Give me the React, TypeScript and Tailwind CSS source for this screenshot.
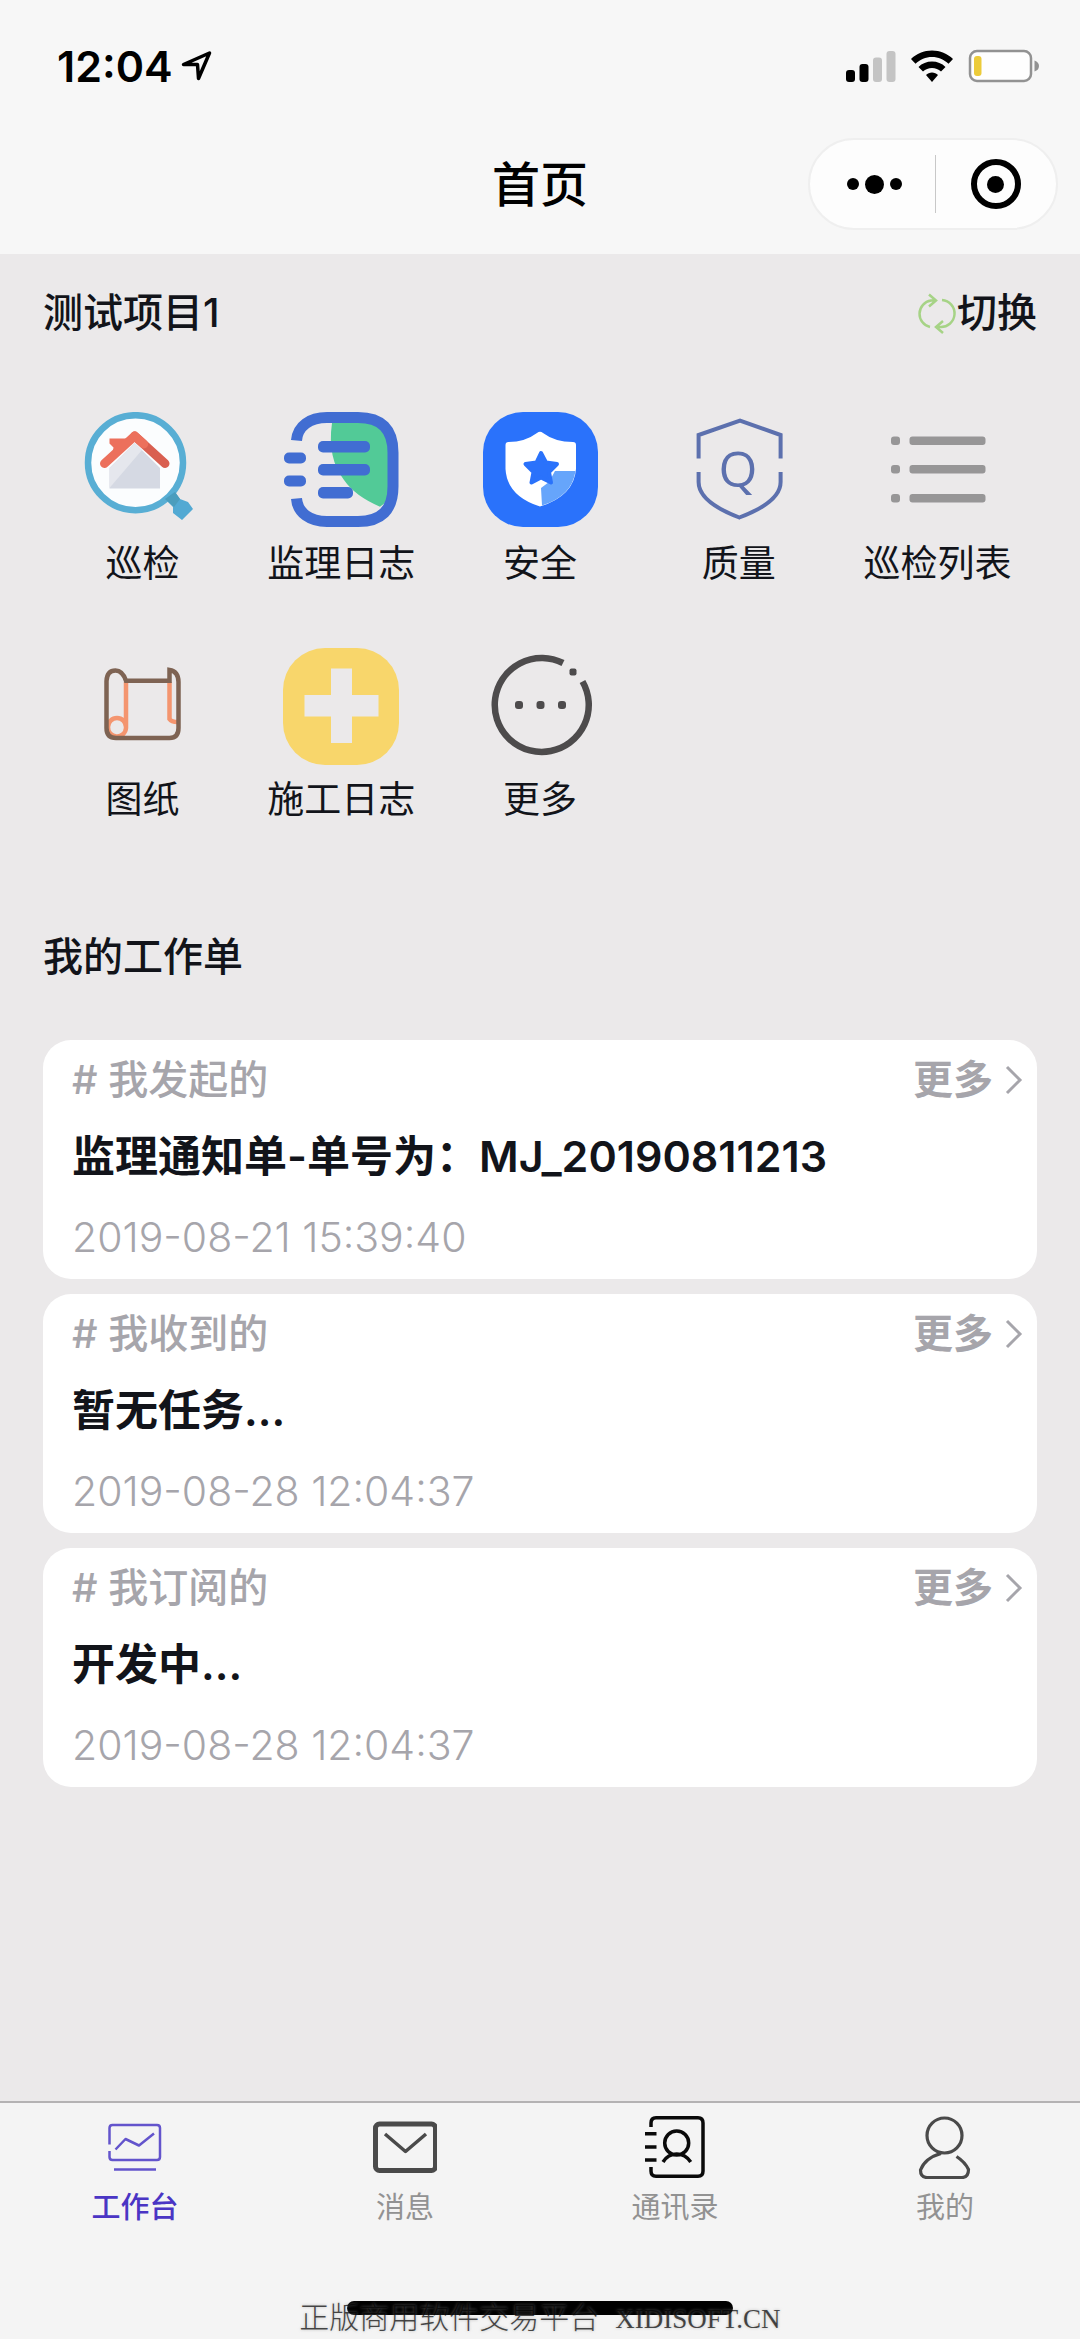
import React, { useState } from 'react';

interface Modulo {
    nome: string;
    icone: React.ReactNode;
}

interface Tarefa {
    id: string;
    grupo: string;
    titulo: string;
    data: string;
}

interface Aba {
    id: string;
    nome: string;
    icone: React.ReactNode;
}

const modulos: Modulo[] = [
    {
        nome: '巡检',
        icone: (
            <>
                <circle cx="51.5" cy="50.7" r="47.5" fill="#fbfdfe" stroke="#58aed4" strokeWidth="6.5" />
                <path d="M25.5 56 50.7 31 76 56v20.5H25.5z" fill="#d5d9e3" />
                <path d="M25.5 56 50.7 31 58 38 25.5 76z" fill="#e5e7ed" />
                <path d="M25.5 26.5h17l-3 12-12 8 2-11-4-4z" fill="#ec705c" />
                <path d="M81 51.5 50.7 24" fill="none" stroke="#d95f50" strokeWidth="9" strokeLinecap="round" />
                <path d="M20.5 51.5 50.7 24l9 8" fill="none" stroke="#ec705c" strokeWidth="9" strokeLinecap="round" strokeLinejoin="round" />
                <path d="m81 87 10-7 5 7 8 3 5 7-11 11-9-7v-6z" fill="#52a9d3" />
                <path d="m81 87 10-7 5 7-6 8z" fill="#4b9dbd" />
            </>
        ),
    },
    {
        nome: '监理日志',
        icone: (
            <>
                <path d="M49 11h35q21 0 21 21v50q0 8-8 12.700Q72 84 61 68 44 46 49 11z" fill="#52ca97" />
                <path
                    d="M13.500 28.500C14.500 14 27 5.500 44 5.500h31q35 0 35 35v34q0 35-35 35H44C27 109.500 14.500 101 13.500 86.500"
                    fill="none"
                    stroke="#416dd2"
                    strokeWidth="11"
                />
                <g fill="#416dd2">
                    <rect x="1" y="40.500" width="22" height="11" rx="5" />
                    <rect x="1" y="63.500" width="22" height="11" rx="5" />
                    <rect x="35" y="29" width="52" height="11.500" rx="5" />
                    <rect x="35" y="52" width="52" height="11.500" rx="5" />
                    <rect x="35" y="75" width="35" height="11.500" rx="5" />
                </g>
            </>
        ),
    },
    {
        nome: '安全',
        icone: (
            <>
                <rect x="1" width="115" height="115" rx="40" fill="#2a72fb" />
                <path
                    d="M55 21q3-2.500 6 0 12 9 30 9 3 0 3 3v24Q92 84 58 94.500 25 84 23.500 57V33q0-3 3-3Q43 30 55 21z"
                    fill="#fff"
                />
                <path d="M59 76l8-6 6-11h20.500Q90 84 60 93.500z" fill="#66a5fb" />
                <path
                    d="m59 41 5 9.500 11 1.500-8 8 2 10.500L59 65.500 49.500 70.500l2-10.500-8-8 11-1.500z"
                    fill="#2a72fb"
                    stroke="#2a72fb"
                    strokeWidth="4"
                    strokeLinejoin="round"
                />
            </>
        ),
    },
    {
        nome: '质量',
        icone: (
            <>
                <g fill="none" stroke="#5c70ae" strokeWidth="4">
                    <path d="M17.600 46.500V23L59 8.500 99.600 23v23.500" />
                    <path d="M17.600 60v10q0 20 40.700 35.500Q99.600 90 99.600 70V60" />
                </g>
                <text x="57" y="75" textAnchor="middle" fontSize="50" fill="#5c70ae" className="font-['Open_Sans',sans-serif]">
                    Q
                </text>
            </>
        ),
    },
    {
        nome: '巡检列表',
        icone: (
            <g fill="#979697">
                <rect x="11" y="24.500" width="9" height="8.500" rx="3" />
                <rect x="29.500" y="24.500" width="76" height="8.500" rx="3" />
                <rect x="11" y="53" width="9" height="8.500" rx="3" />
                <rect x="29.500" y="53" width="76" height="8.500" rx="3" />
                <rect x="11" y="82" width="9" height="8.500" rx="3" />
                <rect x="29.500" y="82" width="76" height="8.500" rx="3" />
            </g>
        ),
    },
    {
        nome: '图纸',
        icone: (
            <g fill="none" strokeWidth="4.500">
                <path d="M42 34v46a9 9 0 1 1-18-1 9 9 0 0 1 18 0M85.500 34v37q2 3 8 3" stroke="#f4956f" />
                <path d="M42 32.700h43.500V22q9 1.500 9 12v46q0 10-9 10H32q-9.500 0-9.500-10V33Q23 22.500 31.500 22.500q7 0 10.500 10.200z" stroke="#7e6353" />
            </g>
        ),
    },
    {
        nome: '施工日志',
        icone: (
            <>
                <rect width="116" height="117" rx="42" fill="#f8d66b" />
                <path d="M48 20.500h21V47h26.500v21.500H69V95H48V68.500H21.500V47H48z" fill="#ebe9ea" />
            </>
        ),
    },
    {
        nome: '更多',
        icone: (
            <>
                <path d="M81 15A47 47 0 1 0 100.500 33.500" fill="none" stroke="#4d4b4c" strokeWidth="6.500" />
                <g fill="#4d4b4c">
                    <rect x="87.500" y="20.500" width="7" height="7" rx="2" />
                    <rect x="33" y="53" width="8" height="8" rx="3" />
                    <rect x="54.500" y="53" width="8" height="8" rx="3" />
                    <rect x="76" y="53" width="8" height="8" rx="3" />
                </g>
            </>
        ),
    },
];

const tarefas: Tarefa[] = [
    { id: 'enviadas', grupo: '# 我发起的', titulo: '监理通知单-单号为：MJ_20190811213', data: '2019-08-21 15:39:40' },
    { id: 'recebidas', grupo: '# 我收到的', titulo: '暂无任务...', data: '2019-08-28 12:04:37' },
    { id: 'assinadas', grupo: '# 我订阅的', titulo: '开发中...', data: '2019-08-28 12:04:37' },
];

const abas: Aba[] = [
    {
        id: 'painel',
        nome: '工作台',
        icone: (
            <g stroke="#6354cc" strokeWidth="2.500">
                <path d="M6.500 29.500V13q0-3 3-3H54q3 0 3 3v29q0 3-3 3H9.500q-3 0-3-3v-6M11 54.500h42" />
                <path d="m12.500 34.500 10-10.500L36 30.500l15-12" />
            </g>
        ),
    },
    {
        id: 'mensagens',
        nome: '消息',
        icone: (
            <g stroke="#4a4a4a">
                <rect x="2.500" y="9" width="60" height="46.500" rx="4" strokeWidth="5" />
                <path d="m12 19 20.500 17.500L53 19" strokeWidth="3.500" />
            </g>
        ),
    },
    {
        id: 'contatos',
        nome: '通讯录',
        icone: (
            <g stroke="#0a0a0a" strokeWidth="3.500">
                <path d="M8 12V8q0-5.300 5-5.300h42q5 0 5 5.300v48q0 5.300-5 5.300H13q-5 0-5-5.300v-4M2 18.700h11.500M2 32h11.500M2 45h11.500" />
                <circle cx="33.700" cy="28" r="12" />
                <path d="M20 47q5-8 13.700-8t14 8" />
            </g>
        ),
    },
    {
        id: 'perfil',
        nome: '我的',
        icone: (
            <g stroke="#4a4a4a" strokeWidth="3.200">
                <circle cx="31.500" cy="20.500" r="17.500" />
                <path d="M28 38.500Q12 43 7.500 55q0 7.500 6.500 7.500h35q6.500 0 6.500-8Q52 47 43.500 41.500" />
            </g>
        ),
    },
];

const BarraStatus: React.FC = () => (
    <div className="flex h-[132px] items-center justify-between pl-[57px] pr-10">
        <div className="flex items-center gap-2">
            <span className="text-[43px] leading-[52px] font-semibold text-black">12:04</span>
            <svg width="32" height="32" viewBox="0 0 32 32" fill="none" stroke="#000" strokeWidth="3.500" strokeLinejoin="round">
                <path d="M2.500 14.500 28.500 3 17.500 28.500l-1-14z" />
            </svg>
        </div>
        <div className="flex items-center gap-[14px]">
            <svg width="50" height="34" viewBox="0 0 50 34">
                <rect y="21" width="9" height="12" rx="3" />
                <rect x="13.500" y="15" width="9" height="18" rx="3" />
                <rect x="27" y="8.500" width="9" height="24.500" rx="3" fill="#c4c4c4" />
                <rect x="40.500" y="2" width="9" height="31" rx="3" fill="#c4c4c4" />
            </svg>
            <svg width="44" height="34" viewBox="0 0 44 34">
                <path d="M22 1.500C30 1.500 37.500 4.600 43 10l-4.500 4.800C34 10.500 28.300 8 22 8S10 10.500 5.500 14.800L1 10C6.500 4.600 14 1.500 22 1.500z" />
                <path d="M22 12.500c5.200 0 10 2 13.500 5.400L31 22.600c-2.500-2.200-5.600-3.500-9-3.500s-6.500 1.300-9 3.500l-4.500-4.700C12 14.500 16.800 12.500 22 12.500z" />
                <path d="M22 23.500c2.300 0 4.500.9 6 2.400L22 33l-6-7.100c1.500-1.500 3.700-2.400 6-2.400z" />
            </svg>
            <svg width="72" height="34" viewBox="0 0 72 34">
                <rect x="2" y="2" width="61" height="30" rx="7" fill="#fefefe" stroke="#929292" strokeWidth="2.500" />
                <rect x="6" y="7" width="7.500" height="20" rx="3" fill="#eccb3a" />
                <path d="M66.500 11.500Q71 13 71 17t-4.500 5.500z" fill="#929292" />
            </svg>
        </div>
    </div>
);

const Cabecalho: React.FC = () => (
    <header className="bg-[#f7f7f7]">
        <BarraStatus />
        <div className="grid h-[122px] grid-cols-[1fr_auto_1fr] items-start px-[22px] pt-1.5">
            <h1 className="col-start-2 text-[48px] leading-[94px] font-medium text-black">首页</h1>
            <div className="flex h-[92px] w-[250px] items-center justify-self-end rounded-full border-2 border-[#efefef] bg-[#fdfdfd]">
                <button type="button" aria-label="更多" className="flex h-full flex-1 items-center justify-center gap-1.5 pl-1">
                    <span className="size-3 rounded-full bg-black" />
                    <span className="size-[19px] rounded-full bg-black" />
                    <span className="size-3 rounded-full bg-black" />
                </button>
                <span className="h-[58px] w-px bg-[#c8c8c8]" />
                <button type="button" aria-label="关闭" className="flex h-full flex-1 items-center justify-center">
                    <span className="flex size-[50px] items-center justify-center rounded-full border-[6px] border-black">
                        <span className="size-[17px] rounded-full bg-black" />
                    </span>
                </button>
            </div>
        </div>
    </header>
);

const App: React.FC = () => {
    const [abaAtiva, setAbaAtiva] = useState('painel');

    return (
        <div className="flex min-h-screen flex-col bg-[#ebe9ea] font-['Inter','Noto_Sans_CJK_SC',sans-serif] text-[#12141a]">
            <Cabecalho />

            <main className="flex-1 px-[43px]">
                {/* Projeto atual */}
                <div className="flex h-[118px] items-center justify-between text-[40px] leading-[60px] font-medium">
                    <h2>测试项目1</h2>
                    <button type="button" className="flex items-center">
                        <svg width="42" height="42" viewBox="0 0 42 42" fill="none" stroke="#a6d386" strokeWidth="2.500">
                            <path d="M20 8.500h-4a13.500 13.500 0 0 0-1 26.500M14 2.500l7 6-7 6" />
                            <path d="M27 8a13.500 13.500 0 0 1-2 27h-3M28 29l-7 6 7 6" />
                        </svg>
                        切换
                    </button>
                </div>

                {/* Módulos */}
                <div className="grid grid-cols-5 gap-y-[58px] pt-10">
                    {modulos.map((modulo) => (
                        <button key={modulo.nome} type="button" className="flex flex-col items-center gap-2">
                            <svg width="116" height="118" viewBox="0 0 116 118">{modulo.icone}</svg>
                            <span className="text-[37px] leading-[52px]">{modulo.nome}</span>
                        </button>
                    ))}
                </div>

                {/* Ordens de trabalho */}
                <h2 className="pt-[101px] text-[40px] leading-[60px] font-medium">我的工作单</h2>
                <div className="mt-[53px] space-y-[15px]">
                    {tarefas.map((tarefa) => (
                        <section key={tarefa.id} className="rounded-[28px] bg-white pt-2.5 pr-3 pb-3 pl-[29px]">
                            <div className="flex items-center justify-between text-[40px] leading-[60px] font-medium text-[#a6a5ab]">
                                <h3>{tarefa.grupo}</h3>
                                <button type="button" className="flex items-center gap-2.5 font-bold">
                                    更多
                                    <svg width="22" height="32" viewBox="0 0 22 32" fill="none" stroke="#a6a5ab" strokeWidth="3">
                                        <path d="m4 3 13 13L4 29" />
                                    </svg>
                                </button>
                            </div>
                            <p className="mt-4 text-[43px] leading-[60px] font-semibold">{tarefa.titulo}</p>
                            <p className="mt-[21px] text-[41px] leading-[60px] font-light text-[#a6a5ab]">{tarefa.data}</p>
                        </section>
                    ))}
                </div>
            </main>

            {/* Navegação inferior */}
            <footer className="border-t-2 border-[#b4b2b3] bg-[#f4f4f4]">
                <nav className="grid grid-cols-4 pt-3">
                    {abas.map((aba) => (
                        <button key={aba.id} type="button" onClick={() => setAbaAtiva(aba.id)} className="flex flex-col items-center gap-2">
                            <svg width="64" height="64" viewBox="0 0 64 64" fill="none" strokeLinejoin="round">
                                {aba.icone}
                            </svg>
                            <span
                                className={`text-[29px] leading-[42px] ${aba.id === abaAtiva ? 'font-medium text-[#4a35c4]' : 'text-[#929292]'}`}
                            >
                                {aba.nome}
                            </span>
                        </button>
                    ))}
                </nav>
                <div className="relative mt-[72px] flex h-[38px] justify-center">
                    <span className="h-[14px] w-[386px] rounded-full bg-black" />
                    <p className="absolute inset-x-0 top-0 flex items-baseline justify-center gap-4 text-[30px] leading-[32px] font-light text-black/70 [text-shadow:0_0_3px_rgb(150_150_150/0.6)]">
                        正版商用软件交易平台
                        <span className="font-['Liberation_Serif',serif] text-[27px] font-normal">XIDISOFT.CN</span>
                    </p>
                </div>
            </footer>
        </div>
    );
};

export default App;
